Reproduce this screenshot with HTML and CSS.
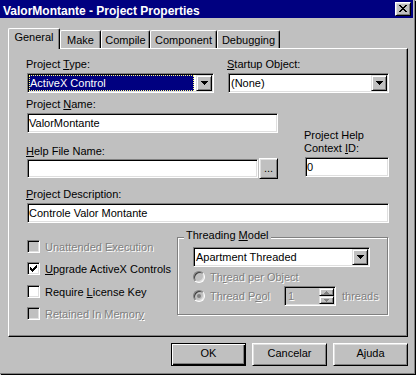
FILE: index.html
```html
<!DOCTYPE html>
<html lang="en">
<head>
<meta charset="utf-8">
<title>ValorMontante - Project Properties</title>
<link rel="stylesheet" href="styles.css">
</head>
<body>
<div class="window">
  <div class="titlebar">
    <span class="title">ValorMontante - Project Properties</span>
    <span class="caption-btn"><svg width="8" height="7" viewBox="0 0 8 7" shape-rendering="crispEdges"><path d="M0 0h2v1h-2zM6 0h2v1h-2zM1 1h2v1h-2zM5 1h2v1h-2zM2 2h4v1h-4zM3 3h2v1h-2zM2 4h4v1h-4zM1 5h2v1h-2zM5 5h2v1h-2zM0 6h2v1h-2zM6 6h2v1h-2z" fill="#000"/></svg></span>
  </div>
  <div class="client">
    <div class="tabs">
      <div class="tab selected tab-general">General</div>
      <div class="tab tab-make">Make</div>
      <div class="tab tab-compile">Compile</div>
      <div class="tab tab-component">Component</div>
      <div class="tab tab-debugging">Debugging</div>
    </div>
    <div class="panel">
      <div class="row-top">
        <div class="field field-type">
          <div class="label">Project <u>T</u>ype:</div>
          <div class="combo">
            <div class="combo-value focused">ActiveX Control</div>
            <div class="dd-btn"><svg width="7" height="4" viewBox="0 0 7 4" shape-rendering="crispEdges"><path d="M0 0h7v1h-7zM1 1h5v1h-5zM2 2h3v1h-3zM3 3h1v1h-1z" fill="#000"/></svg></div>
          </div>
        </div>
        <div class="field field-startup">
          <div class="label"><u>S</u>tartup Object:</div>
          <div class="combo">
            <div class="combo-value">(None)</div>
            <div class="dd-btn"><svg width="7" height="4" viewBox="0 0 7 4" shape-rendering="crispEdges"><path d="M0 0h7v1h-7zM1 1h5v1h-5zM2 2h3v1h-3zM3 3h1v1h-1z" fill="#000"/></svg></div>
          </div>
        </div>
      </div>

      <div class="row-mid">
        <div class="mid-left">
          <div class="label">Project <u>N</u>ame:</div>
          <div class="edit edit-name">ValorMontante</div>
          <div class="label label-help"><u>H</u>elp File Name:</div>
          <div class="help-row">
            <div class="edit edit-help"></div>
            <div class="btn btn-browse">...</div>
          </div>
        </div>
        <div class="mid-right">
          <div class="label">Project Help<br>Context <u>I</u>D:</div>
          <div class="edit edit-context">0</div>
        </div>
      </div>

      <div class="label label-desc"><u>P</u>roject Description:</div>
      <div class="edit edit-desc">Controle Valor Montante</div>

      <div class="row-bottom">
        <div class="checks">
          <div class="check disabled"><span class="cb"></span><span class="check-label">Unattended Execution</span></div>
          <div class="check"><span class="cb"><svg width="7" height="7" viewBox="0 0 7 7" shape-rendering="crispEdges"><path d="M6 0h1v1h-1zM5 1h2v1h-2zM0 2h1v1h-1zM4 2h3v1h-3zM0 3h2v1h-2zM3 3h3v1h-3zM0 4h5v1h-5zM1 5h3v1h-3zM2 6h1v1h-1z" fill="#000"/></svg></span><span class="check-label"><u>U</u>pgrade ActiveX Controls</span></div>
          <div class="check check-license"><span class="cb"></span><span class="check-label">Require <u>L</u>icense Key</span></div>
          <div class="check disabled"><span class="cb"></span><span class="check-label">Retained In Memor<u>y</u></span></div>
        </div>
        <div class="group">
          <div class="group-title">Threading <u>M</u>odel</div>
          <div class="combo combo-thread">
            <div class="combo-value">Apartment Threaded</div>
            <div class="dd-btn"><svg width="7" height="4" viewBox="0 0 7 4" shape-rendering="crispEdges"><path d="M0 0h7v1h-7zM1 1h5v1h-5zM2 2h3v1h-3zM3 3h1v1h-1z" fill="#000"/></svg></div>
          </div>
          <div class="radio-row radio-row-1 disabled"><span class="rb"></span><span class="radio-label">Th<u>r</u>ead per Object</span></div>
          <div class="radio-row radio-row-2 disabled">
            <span class="rb checked"><span class="dot"></span></span>
            <span class="radio-label pool-label">Thread P<u>o</u>ol</span>
            <div class="spin">
              <div class="spin-text">1</div>
              <div class="updown">
                <div class="ud"><svg width="5" height="3" viewBox="0 0 5 3" shape-rendering="crispEdges"><path d="M2 0h1v1h-1zM1 1h3v1h-3zM0 2h5v1h-5z" fill="#808080"/></svg></div>
                <div class="ud"><svg width="5" height="3" viewBox="0 0 5 3" shape-rendering="crispEdges"><path d="M0 0h5v1h-5zM1 1h3v1h-3zM2 2h1v1h-1z" fill="#808080"/></svg></div>
              </div>
            </div>
            <span class="radio-label threads">threads</span>
          </div>
        </div>
      </div>
    </div>
    <div class="buttons">
      <div class="btn btn-dialog btn-default">OK</div>
      <div class="btn btn-dialog">Cancelar</div>
      <div class="btn btn-dialog">Ajuda</div>
    </div>
  </div>
</div>
</body>
</html>
```

FILE: styles.css
```css
* { box-sizing: border-box; }

body {
  margin: 0;
  width: 416px;
  height: 375px;
  overflow: hidden;
  background: #c0c0c0;
  font-family: "Liberation Sans", Arial, sans-serif;
  font-size: 11px;
  color: #000;
}

u { text-decoration: underline; text-underline-offset: 1px; }

.window {
  width: 415px;
  height: 374px;
  padding-right: 1px;
  border-right: 1px solid #808080;
  border-bottom: 1px solid #808080;
  box-shadow: 1px 1px 0 #000;
}

/* Title bar */
.titlebar {
  height: 18px;
  background: #000080;
  color: #fff;
  display: flex;
  align-items: flex-start;
}
.title {
  font-weight: bold;
  font-size: 12px;
  line-height: 16px;
  padding-top: 3px;
  padding-left: 3px;
  white-space: nowrap;
}
.caption-btn {
  margin-left: auto;
  margin-right: 2px;
  margin-top: 2px;
  width: 16px;
  height: 14px;
  background: #c0c0c0;
  border: 1px solid;
  border-color: #fff #000 #000 #fff;
  box-shadow: inset 1px 1px #dfdfdf, inset -1px -1px #808080;
  display: flex;
  align-items: center;
  justify-content: center;
  padding-bottom: 1px;
}
.caption-btn svg { display: block; }

/* Client */
.client {
  padding: 10px 0 0 8px;
}

/* Tabs */
.tabs {
  display: flex;
  align-items: flex-end;
  height: 20px;
}
.tab {
  height: 18px;
  border-top: 1px solid #fff;
  border-left: 1px solid #fff;
  border-right: 1px solid #000;
  box-shadow: inset -1px 0 #808080;
  border-top-left-radius: 2px;
  border-top-right-radius: 2px;
  padding-top: 3px;
  line-height: 13px;
  text-align: center;
  white-space: nowrap;
  background: #c0c0c0;
}
.tab.selected {
  height: 21px;
  margin-bottom: -1px;
  padding-top: 2px;
  position: relative;
  z-index: 1;
}
.tab-general { width: 52px; }
.tab-make { width: 41px; }
.tab-compile { width: 49px; }
.tab-component { width: 67px; }
.tab-debugging { width: 63px; }

/* Panel */
.panel {
  width: 400px;
  height: 289px;
  border-top: 1px solid #fff;
  border-left: 1px solid #fff;
  border-right: 1px solid #000;
  border-bottom: 1px solid #000;
  box-shadow: inset -1px -1px #808080;
  padding: 9px 0 0 18px;
}

.label {
  line-height: 13px;
  margin-left: -1px;
  white-space: nowrap;
}

/* Sunken controls */
.combo, .edit, .spin {
  border: 1px solid;
  border-color: #808080 #fff #fff #808080;
  box-shadow: inset 1px 1px #000, inset -1px -1px #dfdfdf;
  padding: 1px;
  background: #fff;
}
.combo {
  display: flex;
  height: 20px;
}
.combo-value {
  flex: 1;
  line-height: 16px;
  padding-left: 1px;
  white-space: nowrap;
  overflow: hidden;
}
.combo-value.focused {
  background: #000080;
  color: #fff;
  outline: 1px dotted #ffff80;
  outline-offset: -1px;
  margin-right: 2px;
}
.dd-btn {
  width: 16px;
  height: 16px;
  flex: none;
  background: #c0c0c0;
  border: 1px solid;
  border-color: #dfdfdf #000 #000 #dfdfdf;
  box-shadow: inset 1px 1px #fff, inset -1px -1px #808080;
  display: flex;
  align-items: center;
  justify-content: center;
}
.dd-btn svg { display: block; }

.edit {
  height: 20px;
  line-height: 16px;
  padding-left: 1px;
  white-space: nowrap;
  overflow: hidden;
}

/* Top row */
.row-top { display: flex; }
.field .combo { margin-top: 2px; }
.field-type { width: 187px; }
.field-startup { width: 161px; margin-left: 14px; }

/* Middle row */
.row-mid {
  display: flex;
  align-items: flex-start;
  margin-top: 5px;
}
.mid-left { width: 251px; }
.edit-name { margin-top: 2px; width: 251px; }
.label-help { margin-top: 12px; }
.help-row { display: flex; align-items: flex-start; }
.edit-help { width: 233px; height: 19px; margin-top: 1px; }
.btn-browse {
  width: 19px;
  height: 21px;
  margin-left: 1px;
  line-height: 13px;
}
.mid-right {
  width: 84px;
  margin-left: 27px;
  padding-top: 31px;
}
.edit-context { margin-top: 2px; width: 84px; }

.label-desc { margin-top: 9px; }
.edit-desc { margin-top: 2px; width: 362px; }

/* Bottom row */
.row-bottom {
  display: flex;
  margin-top: 6px;
}
.checks {
  width: 150px;
  padding-top: 11px;
  display: flex;
  flex-direction: column;
  gap: 9px;
}
.check {
  display: flex;
  align-items: center;
  height: 13px;
}
.check-license { margin-top: 1px; }
.cb {
  width: 13px;
  height: 13px;
  flex: none;
  border: 1px solid;
  border-color: #808080 #fff #fff #808080;
  box-shadow: inset 1px 1px #000, inset -1px -1px #dfdfdf;
  background: #fff;
  padding: 2px;
}
.cb svg { display: block; }
.check-label {
  margin-left: 5px;
  line-height: 12px;
  white-space: nowrap;
}
.disabled .cb, .disabled .rb { background: #c0c0c0; }
.disabled .check-label,
.disabled .radio-label {
  color: #808080;
  text-shadow: 1px 1px 0 #fff;
}

/* Group box */
.group {
  position: relative;
  margin-top: 8px;
  width: 211px;
  height: 78px;
  border: 1px solid #808080;
  box-shadow: inset 1px 1px #fff, 1px 1px 0 #fff;
  padding: 9px 0 0 15px;
}
.group-title {
  position: absolute;
  top: -9px;
  left: 6px;
  padding: 0 2px;
  background: #c0c0c0;
  line-height: 13px;
  white-space: nowrap;
}
.combo-thread { width: 177px; }

.radio-row {
  display: flex;
  align-items: center;
}
.radio-row-1 { margin-top: 3px; height: 14px; }
.radio-row-2 { margin-top: 2px; height: 20px; }
.rb {
  width: 12px;
  height: 12px;
  flex: none;
  border-radius: 50%;
  border: 1px solid;
  border-color: #808080 #fff #fff #808080;
  box-shadow: inset 1px 1px #404040, inset -1px -1px #dfdfdf;
  background: #fff;
  margin-right: 5px;
  display: flex;
  align-items: center;
  justify-content: center;
}
.dot {
  width: 4px;
  height: 4px;
  border-radius: 50%;
  background: #808080;
}
.radio-label {
  line-height: 13px;
  white-space: nowrap;
}
.pool-label { width: 74px; }

.spin {
  display: flex;
  width: 52px;
  height: 20px;
  background: #c0c0c0;
}
.spin-text {
  flex: 1;
  line-height: 16px;
  padding-left: 2px;
  color: #808080;
  text-shadow: 1px 1px 0 #fff;
}
.updown {
  width: 15px;
  display: flex;
  flex-direction: column;
}
.ud {
  flex: 1;
  background: #c0c0c0;
  border: 1px solid;
  border-color: #dfdfdf #000 #000 #dfdfdf;
  box-shadow: inset 1px 1px #fff, inset -1px -1px #808080;
  display: flex;
  align-items: center;
  justify-content: center;
}
.ud svg { display: block; }
.threads { margin-left: 6px; }

/* Buttons */
.btn {
  background: #c0c0c0;
  border: 1px solid;
  border-color: #fff #000 #000 #fff;
  box-shadow: inset 1px 1px #dfdfdf, inset -1px -1px #808080;
  display: flex;
  align-items: center;
  justify-content: center;
  white-space: nowrap;
}
.buttons {
  display: flex;
  justify-content: flex-end;
  gap: 6px;
  margin-top: 6px;
  width: 400px;
}
.btn-dialog {
  width: 75px;
  height: 23px;
  line-height: 13px;
  padding-bottom: 2px;
}
.btn-default {
  border-color: #000;
  box-shadow: inset 1px 1px #fff, inset -1px -1px #000, inset -2px -2px #808080;
}
```
